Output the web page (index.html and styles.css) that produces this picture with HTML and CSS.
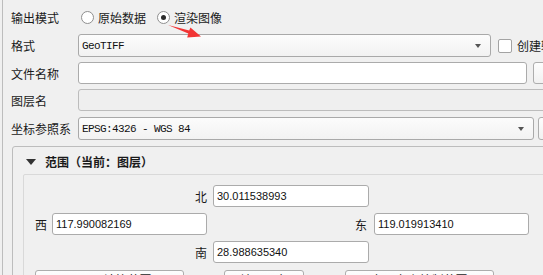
FILE: index.html
```html
<!DOCTYPE html>
<html lang="zh-CN">
<head>
    <meta charset="UTF-8">
    <title>另存为栅格图层</title>
    <link rel="stylesheet" href="styles.css">
</head>
<body>

<div class="painel">
    <div class="linha linha-modo">
        <span class="rotulo">输出模式</span>
        <span class="radio"></span>
        <span class="radio-txt">原始数据</span>
        <span class="radio marcado"></span>
        <span class="radio-txt">渲染图像</span>
    </div>

    <div class="linha linha-formato">
        <span class="rotulo">格式</span>
        <div class="combo combo-formato"><span class="mono">GeoTIFF</span><span class="seta"></span></div>
        <span class="check"></span>
        <span class="check-txt">创建输出选项</span>
    </div>

    <div class="linha linha-arquivo">
        <span class="rotulo">文件名称</span>
        <div class="campo campo-arquivo"></div>
        <div class="botao-lado"></div>
    </div>

    <div class="linha linha-camada">
        <span class="rotulo">图层名</span>
        <div class="campo campo-off"></div>
    </div>

    <div class="linha linha-src">
        <span class="rotulo">坐标参照系</span>
        <div class="combo combo-src"><span class="mono">EPSG:4326 - WGS 84</span><span class="seta"></span></div>
        <div class="botao-lado"></div>
    </div>

    <div class="grupo">
        <div class="grupo-titulo">
            <span class="triangulo"></span>
            <span>范围（当前：图层）</span>
        </div>
        <div class="quadro">
            <div class="ext ext-norte">
                <span class="dir">北</span>
                <div class="campo num">30.011538993</div>
            </div>
            <div class="ext ext-meio">
                <span class="dir">西</span>
                <div class="campo num oeste">117.990082169</div>
                <span class="dir leste-rot">东</span>
                <div class="campo num leste">119.019913410</div>
            </div>
            <div class="ext ext-sul">
                <span class="dir">南</span>
                <div class="campo num">28.988635340</div>
            </div>
            <div class="botoes">
                <div class="botao b1">从图层计算范围</div>
                <div class="botao b2">地图画布</div>
                <div class="botao b3">在画布上绘制范围</div>
            </div>
        </div>
    </div>
</div>

<!-- seta vermelha da anotação -->
<svg class="anotacao" width="543" height="275" viewBox="0 0 543 275">
    <polygon points="168,25 189.2,30.6 190.4,27.4 201,36.5 187.2,37.6 188.3,33.4" fill="#f23535"/>
</svg>

</body>
</html>
```

FILE: styles.css
```css
/* base */
body {
    margin: 0;
    width: 543px;
    height: 275px;
    overflow: hidden;
    background-color: #f0f0f0;
    font-family: "Noto Sans CJK SC", "Noto Sans", sans-serif;
    font-size: 12px;
    color: #1a1a1a;
    position: relative;
}

.painel {
    margin-left: 2px;
    border-left: 1px solid #bdbdbd;
    padding-left: 8px;
    padding-top: 6px;
    width: 720px;
    height: 300px;
}

.linha {
    display: flex;
    align-items: center;
    height: 22px;
    margin-bottom: 5px;
}

.linha-modo { height: 23px; margin-bottom: 5px; }
.linha-formato { height: 23px; margin-bottom: 5px; }
.linha-camada { margin-bottom: 6px; }
.linha-src { height: 23px; margin-bottom: 6px; }

.rotulo {
    width: 67px;
    flex: none;
    white-space: nowrap;
}

/* radios */
.radio {
    width: 11px;
    height: 11px;
    border: 1px solid #8f8f8f;
    border-radius: 50%;
    background: #fff;
    margin-left: 3px;
    position: relative;
    flex: none;
}

.radio.marcado { margin-left: 11px; }

.radio.marcado::after {
    content: "";
    position: absolute;
    left: 3px;
    top: 3px;
    width: 5px;
    height: 5px;
    border-radius: 50%;
    background: #2b2b2b;
}

.radio-txt { margin-left: 4px; }

/* combos e campos */
.combo {
    box-sizing: border-box;
    height: 100%;
    border: 1px solid #a9a9a9;
    border-radius: 3px;
    background: linear-gradient(#fcfcfc, #f2f2f2);
    display: flex;
    align-items: center;
    padding-left: 3px;
    position: relative;
    flex: none;
}

.combo-formato { width: 413px; }
.combo-src { width: 456px; }

.seta {
    position: absolute;
    right: 9px;
    top: 9px;
    width: 0;
    height: 0;
    border-left: 3px solid transparent;
    border-right: 3px solid transparent;
    border-top: 4px solid #555;
}

.mono {
    font-family: "Liberation Mono", monospace;
    font-size: 11px;
    letter-spacing: -0.6px;
    color: #111;
}

.campo {
    box-sizing: border-box;
    height: 100%;
    border: 1px solid #ababab;
    border-radius: 3px;
    background: #fff;
    flex: none;
}

.campo-arquivo { width: 449px; }

.campo-off {
    width: 520px;
    background: #efefef;
    border-color: #bcbcbc;
}

.check {
    width: 12px;
    height: 12px;
    border: 1px solid #a3a3a3;
    border-radius: 2px;
    background: #fff;
    margin-left: 7px;
    flex: none;
}

.check-txt {
    margin-left: 5px;
    white-space: nowrap;
}

.botao-lado {
    box-sizing: border-box;
    width: 40px;
    height: 100%;
    margin-left: 6px;
    border: 1px solid #adadad;
    border-radius: 3px;
    background: linear-gradient(#fdfdfd, #f1f1f1);
    flex: none;
}

.linha-src .botao-lado { margin-left: 4px; }

/* grupo de extensão */
.grupo {
    margin-left: 1px;
    border: 1px solid #bdbdbd;
    border-radius: 3px;
    width: 620px;
    height: 200px;
}

.grupo-titulo {
    box-sizing: border-box;
    height: 27px;
    display: flex;
    align-items: center;
    padding-left: 13px;
    padding-top: 2px;
    font-weight: bold;
}

.triangulo {
    width: 0;
    height: 0;
    border-left: 5px solid transparent;
    border-right: 5px solid transparent;
    border-top: 6px solid #333;
    margin-right: 9px;
    margin-top: 1px;
}

.quadro {
    margin-left: 10px;
    width: 516px;
    height: 140px;
    border: 1px solid #d9d9d9;
    border-radius: 2px;
    padding-left: 11px;
    padding-top: 10px;
}

.ext {
    display: flex;
    align-items: center;
    height: 22px;
    margin-bottom: 6px;
}

.ext-norte, .ext-sul { padding-left: 160px; }
.ext-sul { margin-bottom: 7px; }

.dir {
    width: 12px;
    flex: none;
    margin-right: 6px;
}

.ext-meio .dir { margin-right: 5px; }
.ext-meio .leste-rot { margin-left: 148px; margin-right: 7px; }

.num {
    width: 156px;
    font-family: "Liberation Sans", sans-serif;
    font-size: 11px;
    line-height: 20px;
    padding-left: 3px;
    color: #111;
}

.num.oeste, .num.leste { width: 155px; }

.botoes {
    display: flex;
}

.botao {
    box-sizing: border-box;
    height: 23px;
    border: 1px solid #adadad;
    border-radius: 3px;
    background: linear-gradient(#fdfdfd, #f1f1f1);
    text-align: center;
    line-height: 14px;
    padding-top: 2px;
    overflow: hidden;
    white-space: nowrap;
}

.b1 { width: 149px; }
.b2 { width: 80px; margin-left: 40px; }
.b3 { width: 149px; margin-left: 41px; }

.anotacao {
    position: absolute;
    left: 0;
    top: 0;
    pointer-events: none;
}
```
